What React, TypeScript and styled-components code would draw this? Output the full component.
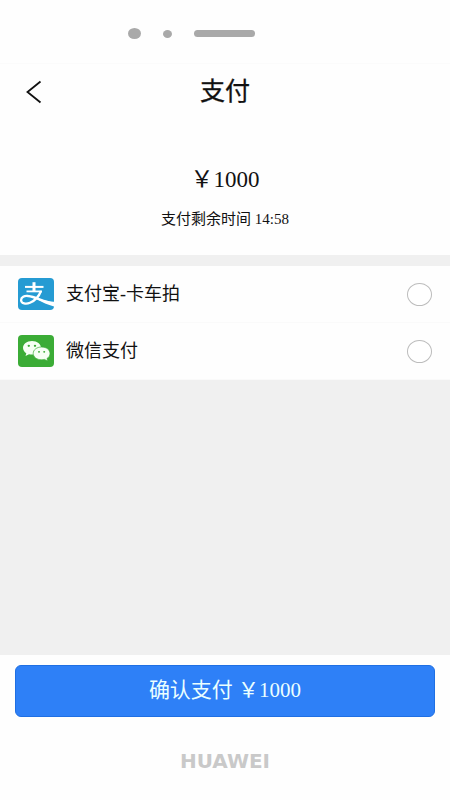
import React, { useState } from 'react';
import styled, { createGlobalStyle } from 'styled-components';

const GlobalStyle = createGlobalStyle`
  *, *::before, *::after { box-sizing: border-box; }
  body {
    margin: 0;
    background: #fefefe;
    color: #111;
    font-family: "Liberation Serif", "Noto Sans CJK SC", serif;
  }
  button, input { font: inherit; margin: 0; }
`;

const Page = styled.div`
  min-height: 100vh;
  display: flex;
  flex-direction: column;
  background: #fefefe;
`;

const SensorBar = styled.div`
  height: 64px;
  padding: 0 68px 0 0;
  display: flex;
  align-items: center;
  justify-content: center;
  gap: 22px;
  border-bottom: 1px solid #fbfbfb;
`;

const Sensor = styled.span<{ $width: number; $height: number }>`
  width: ${(p) => p.$width}px;
  height: ${(p) => p.$height}px;
  margin-top: 4px;
  border-radius: ${(p) => (p.$width > 20 ? '4px' : '50%')};
  background: #a9a9a9;
`;

const Header = styled.header`
  height: 56px;
  padding: 0 20px;
  display: grid;
  grid-template-columns: 28px 1fr 28px;
  align-items: center;
`;

const BackButton = styled.button`
  width: 28px;
  height: 32px;
  padding: 0;
  display: flex;
  align-items: center;
  justify-content: center;
  border: 0;
  background: none;
  color: #111;
  cursor: pointer;
`;

const Title = styled.h1`
  margin: 0;
  font-size: 25px;
  line-height: 32px;
  font-weight: 400;
  text-align: center;
  -webkit-text-stroke: 0.3px #111;
`;

const Summary = styled.section`
  padding: 44px 16px 24px;
  display: flex;
  flex-direction: column;
  align-items: center;
  gap: 11px;
`;

const Amount = styled.p`
  margin: 0;
  font-size: 23px;
  line-height: 32px;
`;

const Remaining = styled.p`
  margin: 0;
  font-size: 15px;
  line-height: 24px;
`;

const Methods = styled.main`
  flex: 1;
  padding-top: 11px;
  background: #f0f0f0;
`;

const Method = styled.label`
  height: 57px;
  padding: 0 18px;
  display: flex;
  align-items: center;
  gap: 12px;
  background: #fefefe;
  border-bottom: 1px solid #fafafa;
  font-size: 18px;
  line-height: 24px;
  cursor: pointer;
`;

const MethodName = styled.span`
  flex: 1;
`;

const Radio = styled.input`
  appearance: none;
  width: 25px;
  height: 23px;
  border: 1px solid #bcbcbc;
  border-radius: 50%;
  background: #fff;
  cursor: pointer;

  &:checked {
    border: 7px solid #2e80f7;
  }
`;

const Footer = styled.footer`
  padding: 10px 15px 0;
  display: flex;
  flex-direction: column;
`;

const PayButton = styled.button`
  height: 52px;
  padding: 0 16px 2px;
  border: 1px solid #1f6fe3;
  border-radius: 6px;
  background: #2e80f7;
  color: #eaffff;
  font-size: 21px;
  line-height: 28px;
  cursor: pointer;
`;

const Brand = styled.div`
  height: 83px;
  padding-top: 4px;
  display: flex;
  align-items: center;
  justify-content: center;
  color: #c9c9c9;
  font-family: "DejaVu Sans", sans-serif;
  font-size: 20px;
  line-height: 24px;
  font-weight: 700;
`;

const AlipayIcon = () => (
  <svg width="36" height="32" viewBox="0 0 36 32" fill="none" aria-hidden="true">
    <rect width="36" height="32" rx="4" fill="#259bd3" />
    <g stroke="#fff" strokeLinecap="butt">
      <path d="M7 8.9H25.5" strokeWidth="2" />
      <path d="M16 4.2V13.5" strokeWidth="3" />
      <path d="M8.5 13.4H24" strokeWidth="1.8" />
      <path
        d="M23 13C21 18.2 17 22.6 12 24.8C8.2 26.4 3.3 25.8 3.1 22.2C3 19 6.5 17.4 10.2 18C17.5 18.9 24.5 23.2 36 25.6"
        strokeWidth="2.3"
      />
    </g>
    <path d="M20.5 20.4C25.5 22.4 30 23.2 36 23.8V28.6C29.5 26.8 24.5 24.2 19 21.5Z" fill="#fff" />
  </svg>
);

const WeChatIcon = () => (
  <svg width="36" height="32" viewBox="0 0 36 32" aria-hidden="true">
    <rect width="36" height="32" rx="4" fill="#3bac36" />
    <path
      d="M14 6C8.7 6 5 9 5 12.8C5 15 6.2 17 8.3 18.3L7.5 21L11 19.2C12 19.5 13 19.6 14 19.6C19.2 19.6 23 16.6 23 12.8S19.2 6 14 6Z"
      fill="#f6fff4"
    />
    <path
      d="M23.6 12C18.8 12 15.2 14.8 15.2 18.4S18.8 24.8 23.6 24.8C24.6 24.8 25.5 24.7 26.4 24.4L29.8 26.1L29 23.5C31 22.3 32 20.5 32 18.4C32 14.8 28.4 12 23.6 12Z"
      fill="#f6fff4"
      stroke="#3bac36"
      strokeWidth="0.7"
    />
    <g fill="#3bac36">
      <ellipse cx="10.8" cy="10.8" rx="1.2" ry="1.1" />
      <ellipse cx="17" cy="10.8" rx="1.2" ry="1.1" />
      <ellipse cx="21" cy="16.8" rx="1" ry="0.9" />
      <ellipse cx="26.2" cy="16.8" rx="1" ry="0.9" />
    </g>
  </svg>
);

const methods = [
  { id: 'alipay', name: '支付宝-卡车拍', icon: <AlipayIcon /> },
  { id: 'wechat', name: '微信支付', icon: <WeChatIcon /> },
];

export default function App() {
  const [selected, setSelected] = useState('');

  return (
    <Page lang="zh-CN">
      <GlobalStyle />
      <SensorBar>
        <Sensor $width={13} $height={11} />
        <Sensor $width={9} $height={8} />
        <Sensor $width={61} $height={7} />
      </SensorBar>
      <Header>
        <BackButton type="button" aria-label="返回">
          <svg width="16" height="24" viewBox="0 0 16 24" fill="none" aria-hidden="true">
            <path d="M14.5 1.5L1.5 12L14.5 22.5" stroke="currentColor" strokeWidth="1.8" />
          </svg>
        </BackButton>
        <Title>支付</Title>
      </Header>
      <Summary>
        <Amount>￥1000</Amount>
        <Remaining>支付剩余时间 14:58</Remaining>
      </Summary>
      <Methods>
        {methods.map((m) => (
          <Method key={m.id} htmlFor={m.id}>
            {m.icon}
            <MethodName>{m.name}</MethodName>
            <Radio
              type="radio"
              id={m.id}
              name="method"
              checked={selected === m.id}
              onChange={() => setSelected(m.id)}
            />
          </Method>
        ))}
      </Methods>
      <Footer>
        <PayButton type="button">确认支付 ￥1000</PayButton>
        <Brand>HUAWEI</Brand>
      </Footer>
    </Page>
  );
}
